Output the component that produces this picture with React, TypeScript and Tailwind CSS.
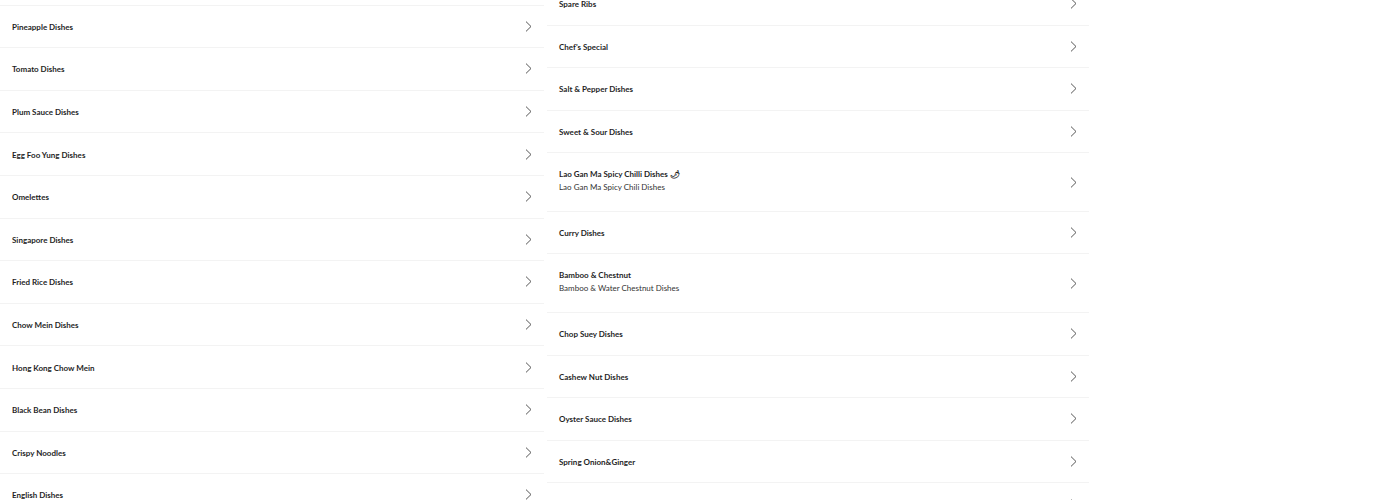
import React from "react";

type Item = { title: string; sub?: string };

const left: Item[] = [
  { title: "Lemon Dishes" },
  { title: "Pineapple Dishes" },
  { title: "Tomato Dishes" },
  { title: "Plum Sauce Dishes" },
  { title: "Egg Foo Yung Dishes" },
  { title: "Omelettes" },
  { title: "Singapore Dishes" },
  { title: "Fried Rice Dishes" },
  { title: "Chow Mein Dishes" },
  { title: "Hong Kong Chow Mein" },
  { title: "Black Bean Dishes" },
  { title: "Crispy Noodles" },
  { title: "English Dishes" },
];

const right: Item[] = [
  { title: "Spare Ribs" },
  { title: "Chef's Special" },
  { title: "Salt & Pepper Dishes" },
  { title: "Sweet & Sour Dishes" },
  { title: "Lao Gan Ma Spicy Chilli Dishes 🌶", sub: "Lao Gan Ma Spicy Chili Dishes" },
  { title: "Curry Dishes" },
  { title: "Bamboo & Chestnut", sub: "Bamboo & Water Chestnut Dishes" },
  { title: "Chop Suey Dishes" },
  { title: "Cashew Nut Dishes" },
  { title: "Oyster Sauce Dishes" },
  { title: "Spring Onion&Ginger" },
  { title: "Duck Dishes" },
];

function Chevron() {
  return (
    <svg width="7" height="11" viewBox="0 0 7 11" fill="none" className="shrink-0">
      <path d="M1 0.6 L6 5.5 L1 10.4" stroke="#555" strokeWidth="1" />
    </svg>
  );
}

function Row({ item }: { item: Item }) {
  return (
    <div
      className={
        "flex items-center justify-between pl-3 pr-3 border-b border-[#f3f3f3] " +
        (item.sub ? "h-[58.5px]" : "h-[42.6px]")
      }
    >
      <div className={"flex flex-col " + (item.sub ? "pb-[2px]" : "pt-[2px]")}>
        <span className="text-[8px] leading-[13px] font-bold text-[#1f1f1f]">{item.title}</span>
        {item.sub && (
          <span className="text-[8px] leading-[13px] text-[#333]">{item.sub}</span>
        )}
      </div>
      <Chevron />
    </div>
  );
}

export default function App() {
  return (
    <div
      className="w-[1400px] h-[500px] overflow-hidden bg-white"
      style={{ fontFamily: "Lato, 'Noto Sans', sans-serif" }}
    >
      <div className="flex gap-[3px] items-start">
        <div className="w-[544px] flex flex-col mt-[-37px]">
          {left.map((it) => (
            <Row key={it.title} item={it} />
          ))}
        </div>
        <div className="w-[542px] flex flex-col mt-[-17px]">
          {right.map((it) => (
            <Row key={it.title} item={it} />
          ))}
        </div>
      </div>
    </div>
  );
}
